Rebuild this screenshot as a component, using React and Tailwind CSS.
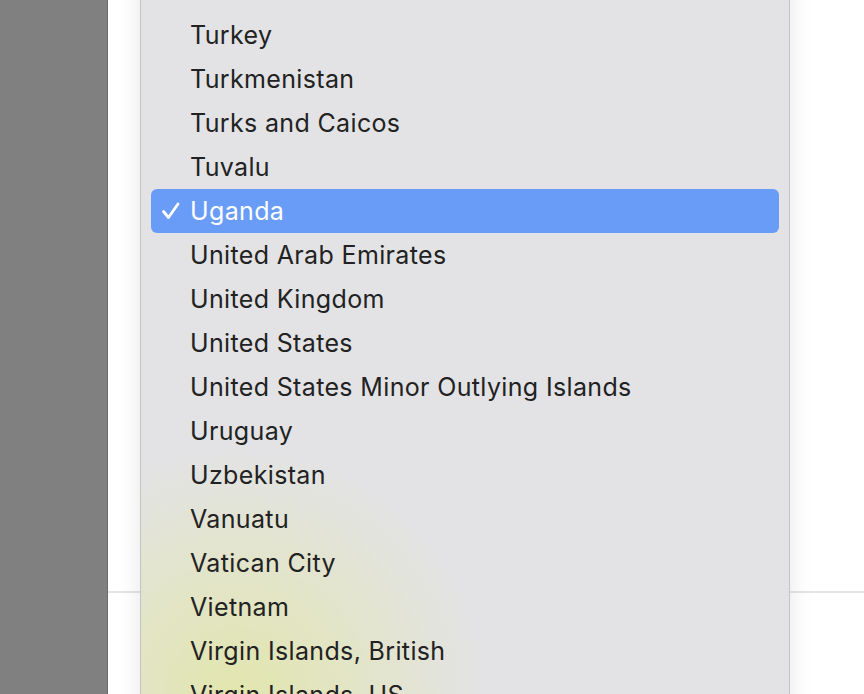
import React from 'react';

const countries = [
    'Tunisia',
    'Turkey',
    'Turkmenistan',
    'Turks and Caicos',
    'Tuvalu',
    'Uganda',
    'United Arab Emirates',
    'United Kingdom',
    'United States',
    'United States Minor Outlying Islands',
    'Uruguay',
    'Uzbekistan',
    'Vanuatu',
    'Vatican City',
    'Vietnam',
    'Virgin Islands, British',
    'Virgin Islands, US',
    'Wallis and Futuna',
];

const Check = () => (
    <svg width="20" height="20" viewBox="0 0 20 20" className="shrink-0">
        <path d="M2.5 10.5 L7.5 16.5 L17 3" fill="none" stroke="white" strokeWidth="2.8" strokeLinecap="round" strokeLinejoin="round" />
    </svg>
);

export default function App() {
    const selected = 'Uganda';
    return (
        <div className="h-[694px] w-[864px] flex overflow-hidden font-['Inter','Liberation_Sans',sans-serif]">
            <div className="w-[108px] bg-[#808080] border-r border-[#6c6c6c]" />
            <div className="flex-1 relative bg-white flex flex-col">
                <div className="h-[593px] border-b-2 border-[#e4e4e4]" />
                <div className="absolute left-[32px] top-[-31px] w-[650px] h-[760px] border-x border-[#c4c4c4] shadow-[0_0_22px_rgba(0,0,0,0.10)] bg-[#e3e3e5] bg-[radial-gradient(circle_at_95px_730px,rgba(226,230,172,1),rgba(227,227,229,0)_250px)]">
                    <ul className="px-[10px]">
                        {countries.map((c) => {
                            const on = c === selected;
                            return (
                                <li key={c} className={`h-[44px] flex items-center rounded-[6px] ${on ? 'bg-[#699cf7] text-white' : 'text-[#222]'}`}>
                                    <span className="w-[39px] pl-[10px] flex items-center">{on && <Check />}</span>
                                    <span className="text-[25px] leading-none tracking-[0.35px]">{c}</span>
                                </li>
                            );
                        })}
                    </ul>
                </div>
            </div>
        </div>
    );
}
